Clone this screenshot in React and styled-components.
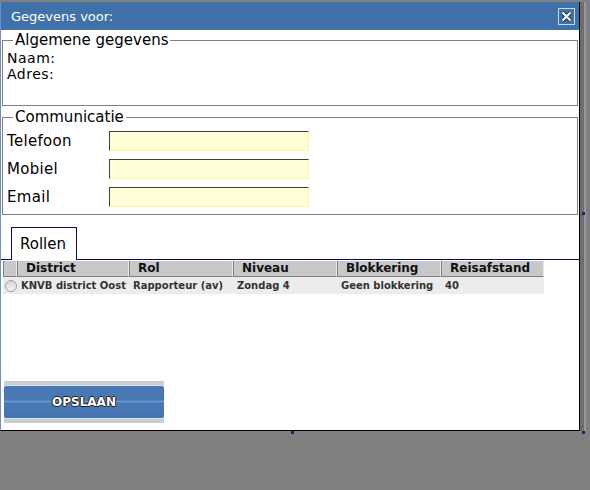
import React from 'react';
import styled, { createGlobalStyle } from 'styled-components';

const GlobalStyle = createGlobalStyle`
  body {
    margin: 0;
    background: #808080;
    font-family: "DejaVu Sans", Verdana, sans-serif;
  }
`;

const Page = styled.div`
  position: relative;
  width: 590px;
  height: 490px;
  overflow: hidden;
`;

const Dialog = styled.div`
  width: 578px;
  height: 428px;
  margin-top: 2px;
  background: #ffffff;
  border-left: 1px solid #6f8fc4;
  border-right: 1px solid #000000;
  border-bottom: 1px solid #000000;
  box-shadow: 4px 0 0 #6e6e6e, 6px 0 0 #999999;
  display: flex;
  flex-direction: column;
`;

const TitleBar = styled.div`
  height: 28px;
  background: #4171a9;
  display: flex;
  align-items: center;
  justify-content: space-between;
  padding: 0 4px 0 10px;
  color: #ffffff;
  font-size: 13px;
`;

const CloseButton = styled.div`
  width: 15px;
  height: 15px;
  border: 1px solid #c9d6e6;
  display: flex;
  align-items: center;
  justify-content: center;
  margin-top: 1px;
`;

const Body = styled.div`
  flex: 1;
  display: flex;
  flex-direction: column;
  padding: 2px 1px 0 1px;
`;

const Fieldset = styled.fieldset`
  margin: 0 0 ${p => p.gap || 0}px 0;
  padding: 0 4px ${p => p.pb || 0}px 4px;
  border: 1px solid #808080;
  font-size: 15px;
  letter-spacing: 0.3px;
  color: #000;
`;

const Legend = styled.legend`
  padding: 0 2px;
  margin-left: 6px;
  font-size: 15px;
  line-height: 17px;
  letter-spacing: 0;
`;

const InfoLine = styled.div`
  font-size: 14px;
  line-height: 16px;
  letter-spacing: 0.5px;
`;

const InfoBlock = styled.div`
  padding-top: 1px;
`;

const FormRow = styled.div`
  display: flex;
  align-items: center;
  height: 20px;
  margin-top: ${p => p.top}px;
`;

const Label = styled.span`
  width: 102px;
`;

const Input = styled.div`
  width: 198px;
  height: 18px;
  background: #ffffd8;
  border-top: 1px solid #404040;
  border-left: 1px solid #404040;
  border-bottom: 1px solid #fff5a0;
  border-right: 1px solid #fff5a0;
`;

const TabStrip = styled.div`
  display: flex;
  padding-left: 10px;
  margin: 12px -1px 0 -1px;
  border-bottom: 1px solid #0a0a5c;
`;

const Tab = styled.div`
  width: 66px;
  height: 33px;
  border: 1px solid #0a0a5c;
  border-bottom: none;
  background: #fff;
  font-size: 15px;
  display: flex;
  align-items: center;
  padding-left: 8px;
  box-sizing: border-box;
  margin-bottom: -1px;
`;

const Table = styled.div`
  margin: 1px 0 0 1px;
  width: 541px;
`;

const HeaderRow = styled.div`
  display: grid;
  grid-template-columns: 14px 112px 104px 104px 104px 103px;
  height: 16px;
  background: #c8c8c8;
`;

const HeaderCell = styled.div`
  border-left: 1px solid #808080;
  border-right: 1px solid #e8e8e8;
  border-bottom: 1px solid #808080;
  font-size: 12px;
  font-weight: bold;
  padding-left: 8px;
  line-height: 15px;
  color: #101010;
  white-space: nowrap;
  &:first-child {
    padding: 0;
  }
`;

const DataRow = styled.div`
  display: grid;
  grid-template-columns: 14px 112px 104px 104px 104px 103px;
  height: 17px;
  background: #ececec;
  align-items: center;
`;

const DataCell = styled.div`
  font-size: 10px;
  font-weight: bold;
  color: #333333;
  padding-left: 4px;
  white-space: nowrap;
`;

const Radio = styled.div`
  width: 10px;
  height: 10px;
  border-radius: 50%;
  border: 1px solid #a0a0a0;
  background: linear-gradient(#d8d8d8, #f4f4f4);
  margin-left: 2px;
`;

const Footer = styled.div`
  margin-top: auto;
  padding: 0 0 7px 2px;
`;

const SaveFrame = styled.div`
  width: 160px;
  padding: 4px 0;
  background: #c9ced3;
`;

const SaveButton = styled.div`
  height: 32px;
  border-radius: 3px;
  border-top: 1px solid #d8e4f0;
  border-bottom: 1px solid #d8e4f0;
  background: linear-gradient(#4776b0 0%, #4a7ab6 44%, #6a9ad6 48%, #4a7ab6 54%, #4474ae 100%);
  display: flex;
  align-items: center;
  justify-content: center;
  color: #ffffff;
  font-size: 12px;
  font-weight: bold;
  text-shadow: 1px 0 0 #222, -1px 0 0 #222, 0 1px 0 #222, 0 -1px 0 #222;
`;

const Handle = styled.div`
  position: absolute;
  width: 3px;
  height: 3px;
  background: #0b2a7a;
  left: ${p => p.x}px;
  top: ${p => p.y}px;
`;

const columns = ['District', 'Rol', 'Niveau', 'Blokkering', 'Reisafstand'];
const row = ['KNVB district Oost', 'Rapporteur (av)', 'Zondag 4', 'Geen blokkering', '40'];

const App = () => (
  <>
    <GlobalStyle />
    <Page>
      <Dialog>
        <TitleBar>
          <span>Gegevens voor:</span>
          <CloseButton>
            <svg width="13" height="13" viewBox="0 0 13 13">
              <path d="M2.5 2.5 L10.5 10.5 M10.5 2.5 L2.5 10.5" stroke="#1a3050" strokeWidth="4" />
              <path d="M2.5 2.5 L10.5 10.5 M10.5 2.5 L2.5 10.5" stroke="#ffffff" strokeWidth="2.2" />
            </svg>
          </CloseButton>
        </TitleBar>
        <Body>
          <Fieldset gap={3} pb={23}>
            <Legend>Algemene gegevens</Legend>
            <InfoBlock>
              <InfoLine>Naam:</InfoLine>
              <InfoLine>Adres:</InfoLine>
            </InfoBlock>
          </Fieldset>
          <Fieldset pb={7}>
            <Legend>Communicatie</Legend>
            <FormRow top={5}>
              <Label>Telefoon</Label>
              <Input />
            </FormRow>
            <FormRow top={8}>
              <Label>Mobiel</Label>
              <Input />
            </FormRow>
            <FormRow top={8}>
              <Label>Email</Label>
              <Input />
            </FormRow>
          </Fieldset>
          <TabStrip>
            <Tab>Rollen</Tab>
          </TabStrip>
          <Table>
            <HeaderRow>
              <HeaderCell />
              {columns.map(c => (
                <HeaderCell key={c}>{c}</HeaderCell>
              ))}
            </HeaderRow>
            <DataRow>
              <Radio />
              {row.map(c => (
                <DataCell key={c}>{c}</DataCell>
              ))}
            </DataRow>
          </Table>
          <Footer>
            <SaveFrame>
              <SaveButton>OPSLAAN</SaveButton>
            </SaveFrame>
          </Footer>
        </Body>
      </Dialog>
      <Handle x={582} y={212} />
      <Handle x={291} y={431} />
      <Handle x={582} y={431} />
    </Page>
  </>
);

export default App;
